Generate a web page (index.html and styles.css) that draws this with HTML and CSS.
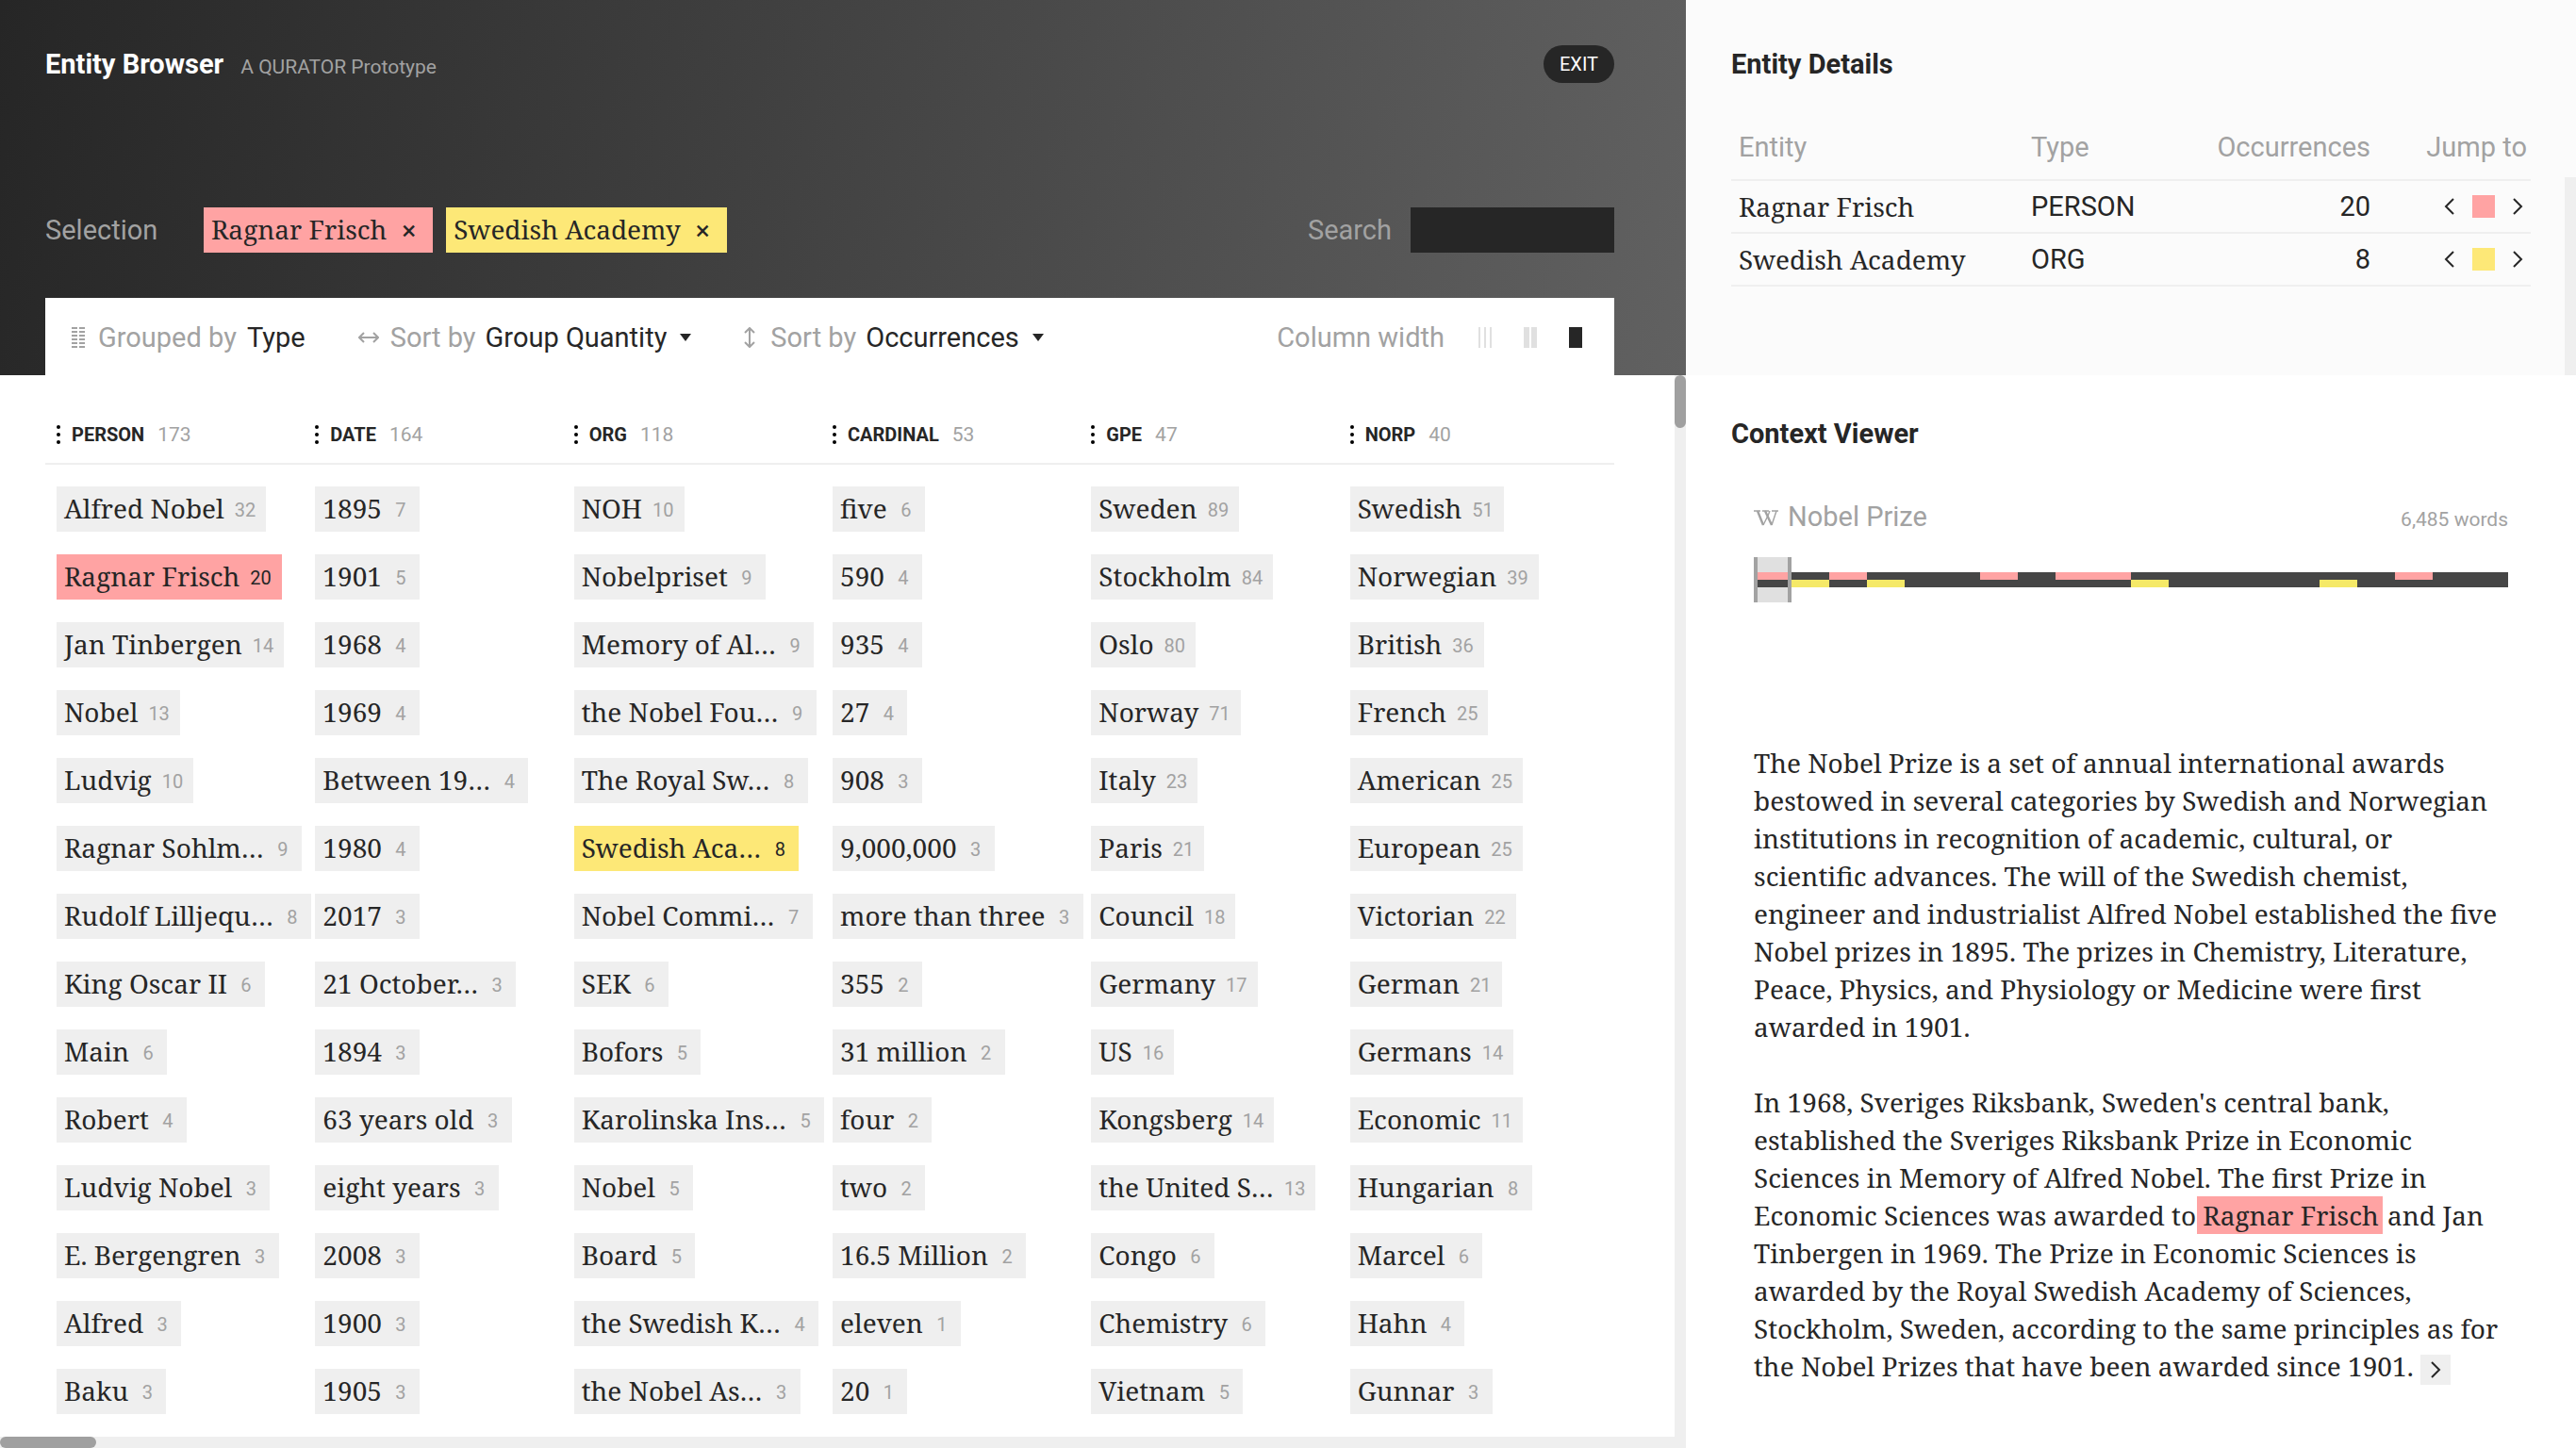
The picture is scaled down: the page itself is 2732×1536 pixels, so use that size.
FILE: index.html
```html
<!DOCTYPE html>
<html lang="en">
<head>
<meta charset="utf-8">
<meta name="viewport" content="width=device-width, initial-scale=1">
<title>Entity Browser</title>
<link rel="stylesheet" href="styles.css">
</head>
<body>
<svg class="sprite" aria-hidden="true">
  <symbol id="prev" viewBox="0 0 12 20"><path d="M10 2 2 10l8 8" fill="none" stroke="currentColor" stroke-width="2"/></symbol>
  <symbol id="next" viewBox="0 0 12 20"><path d="m2 2 8 8-8 8" fill="none" stroke="currentColor" stroke-width="2"/></symbol>
  <symbol id="dots" viewBox="0 0 4 20"><circle cx="2" cy="2" r="2"/><circle cx="2" cy="10" r="2"/><circle cx="2" cy="18" r="2"/></symbol>
</svg>
<div class="app">
  <main class="browser">
    <header class="top">
      <div class="title-row">
        <h1>Entity Browser</h1>
        <span class="small tagline">A QURATOR Prototype</span>
        <button class="exit" type="button">EXIT</button>
      </div>
      <div class="selection-row">
        <span class="muted selection-label">Selection</span>
        <button class="chip red" type="button">Ragnar Frisch<span class="close">×</span></button>
        <button class="chip yellow" type="button">Swedish Academy<span class="close">×</span></button>
        <label class="muted search-label" for="search">Search</label>
        <input class="search" id="search" type="text">
      </div>
      <div class="toolbar">
        <div class="tool grouped">
          <svg width="14" height="22" viewBox="0 0 14 22" fill="#a2a2a2"><path d="M0 0h6v2H0zM8 0h6v2H8zM0 4h6v2H0zM8 4h6v2H8zM0 8h6v2H0zM8 8h6v2H8zM0 12h6v2H0zM8 12h6v2H8zM0 16h6v2H0zM8 16h6v2H8zM0 20h6v2H0zM8 20h6v2H8z"/></svg>
          <span>Grouped by <b>Type</b></span>
        </div>
        <div class="tool by-group">
          <svg width="22" height="12" viewBox="0 0 22 12" fill="none" stroke="#a2a2a2" stroke-width="2"><path d="M1 6h20M6 1 1 6l5 5M16 1l5 5-5 5"/></svg>
          <label for="sort-group">Sort by</label>
          <select id="sort-group"><option>Group Quantity</option></select>
        </div>
        <div class="tool by-entity">
          <svg width="12" height="22" viewBox="0 0 12 22" fill="none" stroke="#a2a2a2" stroke-width="2"><path d="M6 1v20M1 6l5-5 5 5M1 16l5 5 5-5"/></svg>
          <label for="sort-entity">Sort by</label>
          <select id="sort-entity"><option>Occurrences</option></select>
        </div>
        <div class="tool widths">
          <span>Column width</span>
          <button type="button" aria-label="Narrow columns"><svg width="14" height="22" fill="#e0e0e0"><path d="M0 0h2v22H0zM6 0h2v22H6zM12 0h2v22h-2z"/></svg></button>
          <button type="button" aria-label="Medium columns"><svg width="14" height="22" fill="#e0e0e0"><path d="M0 0h6v22H0zM8 0h6v22H8z"/></svg></button>
          <button type="button" aria-label="Wide columns"><svg width="14" height="22" fill="#262626"><path d="M0 0h14v22H0z"/></svg></button>
        </div>
      </div>
    </header>
    <section class="panel">
      <div class="board">
        <div class="heads">
          <h3><svg><use href="#dots"/></svg>PERSON <span>173</span></h3>
          <h3><svg><use href="#dots"/></svg>DATE <span>164</span></h3>
          <h3><svg><use href="#dots"/></svg>ORG <span>118</span></h3>
          <h3><svg><use href="#dots"/></svg>CARDINAL <span>53</span></h3>
          <h3><svg><use href="#dots"/></svg>GPE <span>47</span></h3>
          <h3><svg><use href="#dots"/></svg>NORP <span>40</span></h3>
        </div>
        <div class="columns">
          <ul>
            <li><button type="button">Alfred Nobel<span>32</span></button></li>
            <li><button class="red" type="button">Ragnar Frisch<span>20</span></button></li>
            <li><button type="button">Jan Tinbergen<span>14</span></button></li>
            <li><button type="button">Nobel<span>13</span></button></li>
            <li><button type="button">Ludvig<span>10</span></button></li>
            <li><button type="button">Ragnar Sohlm…<span>9</span></button></li>
            <li><button type="button">Rudolf Lilljequ…<span>8</span></button></li>
            <li><button type="button">King Oscar II<span>6</span></button></li>
            <li><button type="button">Main<span>6</span></button></li>
            <li><button type="button">Robert<span>4</span></button></li>
            <li><button type="button">Ludvig Nobel<span>3</span></button></li>
            <li><button type="button">E. Bergengren<span>3</span></button></li>
            <li><button type="button">Alfred<span>3</span></button></li>
            <li><button type="button">Baku<span>3</span></button></li>
          </ul>
          <ul>
            <li><button type="button">1895<span>7</span></button></li>
            <li><button type="button">1901<span>5</span></button></li>
            <li><button type="button">1968<span>4</span></button></li>
            <li><button type="button">1969<span>4</span></button></li>
            <li><button type="button">Between 19…<span>4</span></button></li>
            <li><button type="button">1980<span>4</span></button></li>
            <li><button type="button">2017<span>3</span></button></li>
            <li><button type="button">21 October…<span>3</span></button></li>
            <li><button type="button">1894<span>3</span></button></li>
            <li><button type="button">63 years old<span>3</span></button></li>
            <li><button type="button">eight years<span>3</span></button></li>
            <li><button type="button">2008<span>3</span></button></li>
            <li><button type="button">1900<span>3</span></button></li>
            <li><button type="button">1905<span>3</span></button></li>
          </ul>
          <ul>
            <li><button type="button">NOH<span>10</span></button></li>
            <li><button type="button">Nobelpriset<span>9</span></button></li>
            <li><button type="button">Memory of Al…<span>9</span></button></li>
            <li><button type="button">the Nobel Fou…<span>9</span></button></li>
            <li><button type="button">The Royal Sw…<span>8</span></button></li>
            <li><button class="yellow" type="button">Swedish Aca…<span>8</span></button></li>
            <li><button type="button">Nobel Commi…<span>7</span></button></li>
            <li><button type="button">SEK<span>6</span></button></li>
            <li><button type="button">Bofors<span>5</span></button></li>
            <li><button type="button">Karolinska Ins…<span>5</span></button></li>
            <li><button type="button">Nobel<span>5</span></button></li>
            <li><button type="button">Board<span>5</span></button></li>
            <li><button type="button">the Swedish K…<span>4</span></button></li>
            <li><button type="button">the Nobel As…<span>3</span></button></li>
          </ul>
          <ul>
            <li><button type="button">five<span>6</span></button></li>
            <li><button type="button">590<span>4</span></button></li>
            <li><button type="button">935<span>4</span></button></li>
            <li><button type="button">27<span>4</span></button></li>
            <li><button type="button">908<span>3</span></button></li>
            <li><button type="button">9,000,000<span>3</span></button></li>
            <li><button type="button">more than three<span>3</span></button></li>
            <li><button type="button">355<span>2</span></button></li>
            <li><button type="button">31 million<span>2</span></button></li>
            <li><button type="button">four<span>2</span></button></li>
            <li><button type="button">two<span>2</span></button></li>
            <li><button type="button">16.5 Million<span>2</span></button></li>
            <li><button type="button">eleven<span>1</span></button></li>
            <li><button type="button">20<span>1</span></button></li>
          </ul>
          <ul>
            <li><button type="button">Sweden<span>89</span></button></li>
            <li><button type="button">Stockholm<span>84</span></button></li>
            <li><button type="button">Oslo<span>80</span></button></li>
            <li><button type="button">Norway<span>71</span></button></li>
            <li><button type="button">Italy<span>23</span></button></li>
            <li><button type="button">Paris<span>21</span></button></li>
            <li><button type="button">Council<span>18</span></button></li>
            <li><button type="button">Germany<span>17</span></button></li>
            <li><button type="button">US<span>16</span></button></li>
            <li><button type="button">Kongsberg<span>14</span></button></li>
            <li><button type="button">the United S…<span>13</span></button></li>
            <li><button type="button">Congo<span>6</span></button></li>
            <li><button type="button">Chemistry<span>6</span></button></li>
            <li><button type="button">Vietnam<span>5</span></button></li>
          </ul>
          <ul>
            <li><button type="button">Swedish<span>51</span></button></li>
            <li><button type="button">Norwegian<span>39</span></button></li>
            <li><button type="button">British<span>36</span></button></li>
            <li><button type="button">French<span>25</span></button></li>
            <li><button type="button">American<span>25</span></button></li>
            <li><button type="button">European<span>25</span></button></li>
            <li><button type="button">Victorian<span>22</span></button></li>
            <li><button type="button">German<span>21</span></button></li>
            <li><button type="button">Germans<span>14</span></button></li>
            <li><button type="button">Economic<span>11</span></button></li>
            <li><button type="button">Hungarian<span>8</span></button></li>
            <li><button type="button">Marcel<span>6</span></button></li>
            <li><button type="button">Hahn<span>4</span></button></li>
            <li><button type="button">Gunnar<span>3</span></button></li>
          </ul>
        </div>
      </div>
      <div class="track vertical"><div class="thumb"></div></div>
      <div class="track horizontal"><div class="thumb"></div></div>
    </section>
  </main>
  <aside class="side">
    <section class="details">
      <h2>Entity Details</h2>
      <table>
        <thead>
          <tr><th class="name">Entity</th><th class="type">Type</th><th class="count">Occurrences</th><th class="jump">Jump to</th></tr>
        </thead>
        <tbody>
          <tr>
            <td class="slab">Ragnar Frisch</td><td>PERSON</td><td class="count">20</td>
            <td><div class="jumper"><button type="button" aria-label="Previous"><svg><use href="#prev"/></svg></button><i class="red"></i><button type="button" aria-label="Next"><svg><use href="#next"/></svg></button></div></td>
          </tr>
          <tr>
            <td class="slab">Swedish Academy</td><td>ORG</td><td class="count">8</td>
            <td><div class="jumper"><button type="button" aria-label="Previous"><svg><use href="#prev"/></svg></button><i class="yellow"></i><button type="button" aria-label="Next"><svg><use href="#next"/></svg></button></div></td>
          </tr>
        </tbody>
      </table>
      <div class="details-track"></div>
    </section>
    <section class="context">
      <h2>Context Viewer</h2>
      <div class="document">
        <div class="doc-head">
          <svg width="26" height="18" viewBox="0 0 26 18" fill="none" stroke="#a2a2a2"><path d="M0 1h7M9 1h7M19 1h7" stroke-width="1.4"/><path d="M4 1l6 15M12 1l7 15" stroke-width="2.4"/><path d="M10 16l5-10 2-5M19 16l5-15" stroke-width="1.4"/></svg>
          <span class="doc-title">Nobel Prize</span>
          <span class="small">6,485 words</span>
        </div>
        <div class="timeline">
          <div class="brush"></div>
          <svg class="marks" viewBox="0 0 20 2" preserveAspectRatio="none" shape-rendering="crispEdges">
            <path fill="#464646" d="M0 0h20v2H0z"/>
            <path fill="#ffa3a3" d="M0 0h1v1H0zM2 0h1v1H2zM6 0h1v1H6zM8 0h2v1H8zM17 0h1v1h-1z"/>
            <path fill="#f5e967" d="M1 1h1v1H1zM3 1h1v1H3zM10 1h1v1h-1zM15 1h1v1h-1z"/>
          </svg>
          <div class="brush edges"></div>
        </div>
        <div class="text slab">
          <p>The Nobel Prize is a set of annual international awards<br>bestowed in several categories by Swedish and Norwegian<br>institutions in recognition of academic, cultural, or<br>scientific advances. The will of the Swedish chemist,<br>engineer and industrialist Alfred Nobel established the five<br>Nobel prizes in 1895. The prizes in Chemistry, Literature,<br>Peace, Physics, and Physiology or Medicine were first<br>awarded in 1901.</p>
          <p>In 1968, Sveriges Riksbank, Sweden's central bank,<br>established the Sveriges Riksbank Prize in Economic<br>Sciences in Memory of Alfred Nobel. The first Prize in<br>Economic Sciences was awarded to <mark class="red">Ragnar Frisch</mark> and Jan<br>Tinbergen in 1969. The Prize in Economic Sciences is<br>awarded by the Royal Swedish Academy of Sciences,<br>Stockholm, Sweden, according to the same principles as for<br>the Nobel Prizes that have been awarded since 1901. <button class="more" type="button" aria-label="Next passage"><svg><use href="#next"/></svg></button></p>
        </div>
      </div>
    </section>
  </aside>
</div>
</body>
</html>
```
FILE: styles.css
```css
* { box-sizing: border-box; }

body {
  margin: 0;
  background: #fff;
  color: #262626;
  font: 29px/36px Roboto, sans-serif;
}

h1, h2, h3, p, ul { margin: 0; padding: 0; }
h1, h2 { font-size: 29px; line-height: 36px; font-weight: 700; }
ul { list-style: none; }
svg { display: block; flex: none; }

button, input, select {
  margin: 0;
  padding: 0;
  border: 0;
  border-radius: 0;
  background: none;
  color: inherit;
  font: inherit;
}

.sprite { position: absolute; width: 0; height: 0; }
.slab, .chip, .columns button { font-family: "Roboto Slab", "Noto Serif", "DejaVu Serif", serif; font-size: 28px; }
.small { color: #a2a2a2; font-size: 21px; }
.muted { color: #a2a2a2; }

.app {
  display: grid;
  grid-template-columns: minmax(0, 447fr) minmax(0, 236fr);
  min-height: 100vh;
}

/* Left: header, toolbar and entity columns */
.browser { display: flex; flex-direction: column; }

.top {
  padding: 48px 76px 0 48px;
  background: linear-gradient(100deg, #262626, #616161);
}

.title-row { display: flex; align-items: baseline; gap: 18px; height: 40px; line-height: 40px; }
.title-row h1 { color: #fff; line-height: 40px; }
.exit {
  align-self: center;
  margin-left: auto;
  padding: 0 17px;
  border-radius: 20px;
  background: #262626;
  color: #fff;
  font-size: 20px;
  line-height: 40px;
}

.selection-row { display: flex; align-items: center; margin-top: 132px; }
.selection-label { width: 168px; }
.chip { height: 48px; margin-right: 14px; padding: 0 18px 0 8px; white-space: nowrap; }
.close { margin-left: 16px; font-family: Roboto, sans-serif; }
.red, .columns .red { background: #ffa3a3; }
.yellow, .columns .yellow { background: #fde877; }
.search-label { margin-left: auto; }
.search { width: 216px; height: 48px; margin-left: 20px; padding: 0 8px; background: #262626; color: #fff; }

.toolbar {
  display: flex;
  align-items: center;
  height: 82px;
  margin-top: 48px;
  padding: 2px 34px 0 28px;
  background: #fff;
  color: #a2a2a2;
  white-space: nowrap;
}
.tool { display: flex; align-items: center; gap: 14px; }
.tool b { margin-left: 4px; color: #262626; font-weight: 400; }
.by-group { gap: 12px; margin-left: 56px; }
.by-entity { gap: 16px; margin-left: 56px; }
.tool select {
  appearance: none;
  field-sizing: content;
  margin-left: -2px;
  padding-right: 26px;
  background: url("data:image/svg+xml,%3Csvg xmlns='http://www.w3.org/2000/svg' width='12' height='8'%3E%3Cpath d='M0 0h12L6 8z' fill='%23262626'/%3E%3C/svg%3E") no-repeat right center;
  color: #262626;
}
.by-entity select { margin-left: -6px; }
.widths { gap: 34px; margin-left: auto; }
.widths span { margin-right: 2px; }

.panel {
  display: grid;
  flex: 1;
  grid-template: minmax(0, 1fr) 12px / minmax(0, 1fr) 12px;
}
.board { padding: 51px 64px 24px 48px; }
.heads, .columns { display: grid; grid-template-columns: repeat(6, minmax(0, 1fr)); padding: 0 6px 0 12px; }
.heads { padding-bottom: 18px; border-bottom: 2px solid #efefef; }
.heads h3 { display: flex; align-items: center; font-size: 20px; line-height: 24px; }
.heads svg { width: 4px; height: 20px; margin-right: 12px; }
.heads span { margin-left: 14px; color: #a2a2a2; font-size: 21px; font-weight: 400; }

.columns { margin-top: 23px; }
.columns ul { display: grid; gap: 24px; justify-items: start; }
.columns li { display: flex; }
.columns button {
  display: flex;
  align-items: center;
  height: 48px;
  padding: 0 0 2px 8px;
  background: #efefef;
  white-space: nowrap;
}
.columns button span {
  min-width: 40px;
  padding: 4px 11px 0;
  color: #a2a2a2;
  font: 20px/24px Roboto, sans-serif;
  text-align: center;
}
.columns .red span, .columns .yellow span { color: #262626; }

.track { background: #efefef; }
.horizontal { grid-column: 1 / -1; }
.thumb { border-radius: 6px; background: #a0a0a0; }
.vertical .thumb { height: 56px; }
.horizontal .thumb { width: 102px; height: 12px; }

/* Right: details table and context viewer */
.side { display: flex; flex-direction: column; }

.details { position: relative; height: 398px; padding: 50px 48px 0; background: #fbfbfb; }
.details-track { position: absolute; inset: 188px 0 0 auto; width: 12px; background: #efefef; }

table { width: 100%; margin-top: 36px; border-spacing: 0; table-layout: fixed; }
th, td { padding: 0 8px; border-bottom: 2px solid #efefef; text-align: left; }
th { height: 70px; color: #a2a2a2; font-weight: 400; }
td { height: 56px; }
.name { width: 310px; }
.type { width: 180px; }
.count { text-align: right; }
.jump { width: 162px; padding-right: 4px; text-align: right; }
.jumper { display: flex; align-items: center; justify-content: flex-end; gap: 18px; }
.jumper i { width: 24px; height: 24px; }
.jumper svg, .more svg { width: 12px; height: 20px; }

.context { flex: 1; padding: 44px 48px; }
.document { margin-top: 52px; padding: 0 24px; }
.doc-head { display: flex; align-items: baseline; color: #a2a2a2; }
.doc-head svg { margin-right: 10px; align-self: center; }
.doc-head .small { margin-left: auto; }

.timeline { position: relative; display: flex; align-items: center; height: 48px; margin-top: 24px; }
.doc-head + .timeline { margin-top: 22px; }
.marks { position: relative; width: 100%; height: 16px; }
.brush { position: absolute; inset: 0 auto 0 0; width: 5%; background: #e0e0e0; }
.edges { border: solid #a2a2a2; border-width: 0 4px; background: none; }

.text { margin-top: 150px; line-height: 40px; white-space: nowrap; }
.text p + p { margin-top: 40px; }
mark { display: inline-block; height: 40px; margin: 0 -2px 0 -6px; padding: 0 4px 0 6px; color: inherit; vertical-align: top; }
.more { display: inline-flex; align-items: center; justify-content: center; width: 32px; height: 32px; background: #efefef; vertical-align: middle; }
```
